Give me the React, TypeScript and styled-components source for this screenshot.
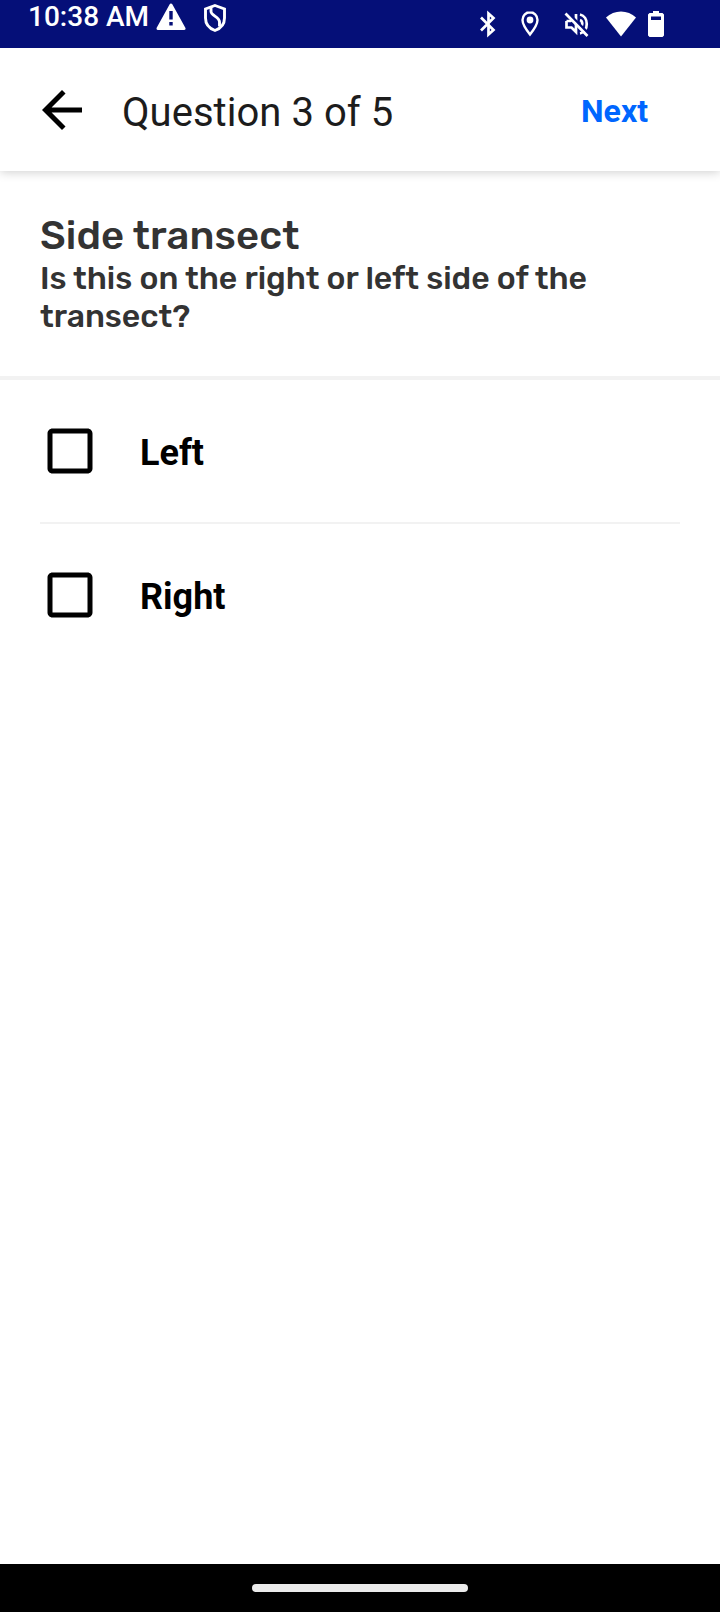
import React from 'react';
import styled, { createGlobalStyle } from 'styled-components';

const GlobalStyle = createGlobalStyle`
  * { box-sizing: border-box; }
  body { margin: 0; background: #fff; font-family: Roboto, sans-serif; }
`;

const Screen = styled.div`
  display: flex;
  flex-direction: column;
  width: 720px;
  height: 1612px;
  background: #fff;
  overflow: hidden;
`;

const StatusBar = styled.div`
  display: flex;
  justify-content: space-between;
  align-items: flex-start;
  height: 48px;
  flex: none;
  padding: 0 56px 0 28px;
  background: #050f78;
  color: #fff;
  z-index: 2;
`;

const StatusGroup = styled.div<{ $top?: number }>`
  display: flex;
  align-items: center;
  padding-top: ${(p) => p.$top ?? 0}px;
`;

const Clock = styled.span`
  width: 128px;
  font-size: 28px;
  font-weight: 500;
  line-height: 33px;
  white-space: nowrap;
`;

const StatusIcon = styled.svg<{ $gap?: number }>`
  display: block;
  flex: none;
  margin-left: ${(p) => p.$gap ?? 0}px;
`;

const Header = styled.header`
  display: flex;
  align-items: center;
  flex: none;
  height: 123px;
  padding: 3px 72px 0 32px;
  background: #fff;
  box-shadow: 0 1px 10px rgba(0, 0, 0, 0.2);
  z-index: 1;
`;

const BackButton = styled.button`
  border: 0;
  padding: 0 0 2px;
  background: none;
  line-height: 0;
`;

const HeaderTitle = styled.h1`
  margin: 4px 0 0 30px;
  flex: 1;
  font-size: 40px;
  font-weight: 400;
  line-height: 48px;
  letter-spacing: 0.04px;
  color: #1c1c1c;
`;

const NextButton = styled.button`
  border: 0;
  padding: 0;
  background: none;
  font-family: inherit;
  font-size: 32px;
  font-weight: 700;
  line-height: 38px;
  color: #0066ff;
`;

const Prompt = styled.section`
  flex: none;
  height: 209px;
  padding: 41px 40px 0;
  border-bottom: 4px solid #f2f2f2;
  color: #333;
  font-family: Rubik, Inter, sans-serif;
`;

const PromptTitle = styled.h2`
  margin: 0;
  font-size: 40px;
  font-weight: 500;
  line-height: 47px;
  letter-spacing: 0.12px;
`;

const PromptText = styled.p`
  margin: 0;
  font-size: 32px;
  font-weight: 500;
  line-height: 38px;
  letter-spacing: -0.05px;
`;

const Options = styled.ul`
  flex: 1;
  margin: 0;
  padding: 0 40px;
  list-style: none;
`;

const Option = styled.li`
  display: flex;
  align-items: center;
  gap: 40px;
  height: 142px;
  color: #000;
  & + & {
    height: 144px;
    border-top: 2px solid #f2f2f2;
  }
`;

const OptionLabel = styled.span`
  padding-top: 4px;
  font-size: 36px;
  font-weight: 700;
  line-height: 44px;
`;

const NavBar = styled.footer`
  display: flex;
  justify-content: center;
  align-items: center;
  flex: none;
  height: 48px;
  background: #000;
`;

const NavHandle = styled.div`
  width: 216px;
  height: 8px;
  border-radius: 4px;
  background: #ebebeb;
`;

const CheckIcon = () => (
  <svg width="60" height="60" viewBox="0 0 24 24" fill="#000">
    <path d="M19 5v14H5V5h14m0-2H5c-1.1 0-2 .9-2 2v14c0 1.1.9 2 2 2h14c1.1 0 2-.9 2-2V5c0-1.1-.9-2-2-2z" />
  </svg>
);

export default function App() {
  return (
    <>
      <GlobalStyle />
      <Screen>
        <StatusBar>
          <StatusGroup>
            <Clock>10:38 AM</Clock>
            <StatusIcon width="30" height="32" viewBox="0 0 30 32">
              <path d="M15 4 28 27.5H2Z" fill="#fff" stroke="#fff" strokeWidth="3" strokeLinejoin="round" />
              <path d="M15 10v8.500M15 21v3.500" stroke="#050f78" strokeWidth="3.400" />
            </StatusIcon>
            <StatusIcon $gap={17} width="24" height="32" viewBox="0 0 24 32" fill="none" stroke="#fff" strokeWidth="2.9">
              <path d="M12 4.500 21.500 8v9c0 6-4 10.500-9.500 12.500C6.500 27.500 2.500 23 2.500 17V8Z" />
              <path d="M8 6v4.500c0 4 8.500 5.500 8.500 10.500v4.500" />
            </StatusIcon>
          </StatusGroup>
          <StatusGroup $top={10}>
            <StatusIcon width="17" height="28" viewBox="0 0 17 28" fill="none" stroke="#fff" strokeWidth="2.7">
              <path d="M1 7.500 13.500 20 8.500 24.500V3.500L13.500 8 1 20.500" />
            </StatusIcon>
            <StatusIcon $gap={24} width="18" height="28" viewBox="0 0 18 28">
              <path d="M9 2.300C5.200 2.300 1.500 5 1.500 10c0 5 7.500 14.500 7.500 14.500S16.500 15 16.500 10c0-5-3.700-7.700-7.500-7.700Z" fill="none" stroke="#fff" strokeWidth="2.400" />
              <circle cx="9" cy="10" r="3.400" fill="#fff" />
            </StatusIcon>
            <StatusIcon $gap={25} width="26" height="28" viewBox="0 0 26 28" fill="none" stroke="#fff" strokeWidth="2.7">
              <path d="M2.500 11v6.500h5l4.500 4.500V4M9 9 6.500 11h-4M16 10c3 1 3 6 0 8M16 4.500c9 2 9 17 0 19" />
              <path d="M3 2 25 24" stroke="#050f78" strokeWidth="2.500" />
              <path d="M1.500 3.500 23.500 26" />
            </StatusIcon>
            <StatusIcon $gap={16} width="30" height="28" viewBox="0 0 30 28">
              <path d="M0 7.500C8-.5 22-.5 30 7.500L15 26.500Z" fill="#fff" />
            </StatusIcon>
            <StatusIcon $gap={12} width="16" height="28" viewBox="0 0 16 28">
              <path d="M5 1h6v2h3.500L16 4.500V25.500L14.500 27h-13L0 25.500V4.500L1.500 3H5Z" fill="#fff" />
              <path d="M3 6.500h10v3.500H3Z" fill="#050f78" />
            </StatusIcon>
          </StatusGroup>
        </StatusBar>
        <Header>
          <BackButton aria-label="Back">
            <svg width="60" height="60" viewBox="0 0 24 24">
              <path d="M20 11H7.830l5.590-5.590L12 4l-8 8 8 8 1.410-1.410L7.830 13H20v-2z" />
            </svg>
          </BackButton>
          <HeaderTitle>Question 3 of 5</HeaderTitle>
          <NextButton>Next</NextButton>
        </Header>
        <Prompt>
          <PromptTitle>Side transect</PromptTitle>
          <PromptText>Is this on the right or left side of the transect?</PromptText>
        </Prompt>
        <Options>
          {['Left', 'Right'].map((label) => (
            <Option key={label}>
              <CheckIcon />
              <OptionLabel>{label}</OptionLabel>
            </Option>
          ))}
        </Options>
        <NavBar>
          <NavHandle />
        </NavBar>
      </Screen>
    </>
  );
}
